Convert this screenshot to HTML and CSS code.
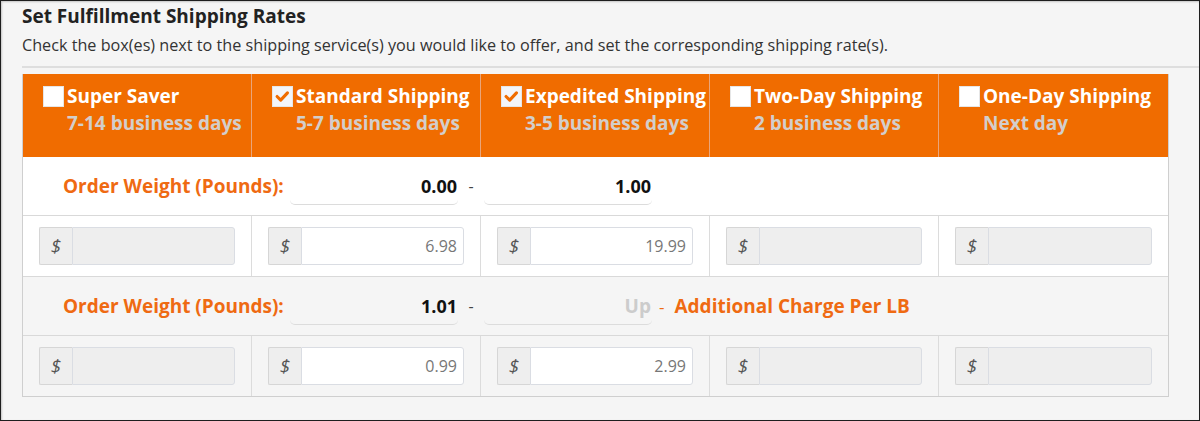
FILE: index.html
```html
<!DOCTYPE html>
<html>
<head>
  <title>Set Fulfillment Shipping Rates</title>
  <link rel="stylesheet" href="styles.css">
</head>
<body>
<div id='content'>
  <h2 class='title'>Set Fulfillment Shipping Rates</h2>
  <p class='subtitle'>Check the box(es) next to the shipping service(s) you would like to offer, and set the corresponding shipping rate(s).</p>
  <hr>

  <div class='rates'>
    <!-- header: one cell per shipping service -->
    <div class='rates-head'>
      <div class='service'>
        <div class='service-name'><span class='check'></span>Super Saver</div>
        <div class='service-days'>7-14 business days</div>
      </div>
      <div class='service'>
        <div class='service-name'><span class='check checked'><svg viewBox='0 0 21 21'><path d='M4.5 10.5 L8.5 14.5 L16 6.5'/></svg></span>Standard Shipping</div>
        <div class='service-days'>5-7 business days</div>
      </div>
      <div class='service'>
        <div class='service-name'><span class='check checked'><svg viewBox='0 0 21 21'><path d='M4.5 10.5 L8.5 14.5 L16 6.5'/></svg></span>Expedited Shipping</div>
        <div class='service-days'>3-5 business days</div>
      </div>
      <div class='service'>
        <div class='service-name'><span class='check'></span>Two-Day Shipping</div>
        <div class='service-days'>2 business days</div>
      </div>
      <div class='service'>
        <div class='service-name'><span class='check'></span>One-Day Shipping</div>
        <div class='service-days'>Next day</div>
      </div>
    </div>

    <div class='weight-row'>
      <div class='weight-label'>Order Weight (Pounds):</div>
      <div class='weight-input'>0.00</div>
      <div class='dash'>-</div>
      <div class='weight-input'>1.00</div>
    </div>

    <div class='price-row'>
      <div class='price-cell'><div class='input-group'><span class='addon'>$</span><span class='price disabled'></span></div></div>
      <div class='price-cell'><div class='input-group'><span class='addon'>$</span><span class='price'>6.98</span></div></div>
      <div class='price-cell'><div class='input-group'><span class='addon'>$</span><span class='price'>19.99</span></div></div>
      <div class='price-cell'><div class='input-group'><span class='addon'>$</span><span class='price disabled'></span></div></div>
      <div class='price-cell'><div class='input-group'><span class='addon'>$</span><span class='price disabled'></span></div></div>
    </div>

    <div class='weight-row alt'>
      <div class='weight-label'>Order Weight (Pounds):</div>
      <div class='weight-input'>1.01</div>
      <div class='dash'>-</div>
      <div class='weight-input up'>Up</div>
      <div class='extra'><span class='extra-dash'>-</span>Additional Charge Per LB</div>
    </div>

    <div class='price-row alt'>
      <div class='price-cell'><div class='input-group'><span class='addon'>$</span><span class='price disabled'></span></div></div>
      <div class='price-cell'><div class='input-group'><span class='addon'>$</span><span class='price'>0.99</span></div></div>
      <div class='price-cell'><div class='input-group'><span class='addon'>$</span><span class='price'>2.99</span></div></div>
      <div class='price-cell'><div class='input-group'><span class='addon'>$</span><span class='price disabled'></span></div></div>
      <div class='price-cell'><div class='input-group'><span class='addon'>$</span><span class='price disabled'></span></div></div>
    </div>
  </div>
</div>
</body>
</html>
```

FILE: styles.css
```css
html, body {
    margin: 0;
    height: 100%;
}

body {
    box-sizing: border-box;
    background-color: #f5f5f5;
    border: 1px solid #1e1e1e;
    box-shadow: inset 1px 1px 2px rgba(0, 0, 0, 0.2);
    font-family: 'Open Sans', 'Liberation Sans', sans-serif;
    color: #222;
    overflow: hidden;
}

#content {
    padding: 3px 0 0 21px;
}

.title {
    margin: 0;
    font-size: 19px;
    line-height: 24px;
    font-weight: 700;
    color: #222;
}

.subtitle {
    margin: 7px 0 0 0;
    font-size: 16.2px;
    line-height: 21px;
    color: #333;
}

hr {
    margin: 10px 0 0 0;
    border: none;
    height: 2px;
    background-color: #dedede;
}

.rates {
    margin-top: 6px;
    width: 1147px;
    box-sizing: border-box;
    border: 1px solid #cfcfcf;
    border-top: none;
}

/* header */
.rates-head {
    display: grid;
    grid-template-columns: repeat(5, 1fr);
    background-color: #f06c00;
}

.service {
    padding: 9px 0 20px 20px;
    border-right: 1px solid #e9a57a;
    font-size: 19px;
    line-height: 27px;
    font-weight: 700;
    white-space: nowrap;
}

.service:last-child {
    border-right: none;
}

.service-name {
    display: flex;
    align-items: center;
    color: #fff;
}

.service-days {
    padding-left: 24px;
    color: #d3cecb;
}

.check {
    width: 21px;
    height: 21px;
    margin-right: 3px;
    box-sizing: border-box;
    border: 1px solid #e6e6e6;
    background-color: #fff;
    display: inline-block;
}

.check.checked {
    background-color: #f3f5fa;
}

.check svg {
    display: block;
    width: 19px;
    height: 19px;
}

.check path {
    fill: none;
    stroke: #f06c00;
    stroke-width: 3.4;
    stroke-linecap: round;
    stroke-linejoin: round;
}

/* weight rows */
.weight-row {
    display: flex;
    align-items: center;
    height: 58px;
    padding-left: 40px;
    background-color: #fff;
    border-bottom: 1px solid #d9d9d9;
    font-size: 18px;
    font-weight: 700;
}

.weight-row.alt,
.price-row.alt {
    background-color: #f5f5f5;
}

.weight-label {
    width: 227px;
    color: #ef6a12;
    font-size: 19px;
    white-space: nowrap;
}

.weight-input {
    width: 168px;
    height: 38px;
    line-height: 38px;
    box-sizing: border-box;
    padding-right: 1px;
    text-align: right;
    border-bottom: 1px solid #dcdcdc;
    border-radius: 0 0 5px 5px;
    color: #111;
}

.weight-input.up {
    color: #cccccc;
    font-size: 19px;
}

.dash {
    width: 26px;
    text-align: center;
    color: #444;
    font-weight: 400;
    font-size: 16px;
}

.extra {
    color: #ef6a12;
    font-size: 19px;
    white-space: nowrap;
}

.extra-dash {
    margin: 0 10px 0 7px;
    font-weight: 400;
    font-size: 17px;
}

/* price rows */
.price-row {
    display: grid;
    grid-template-columns: repeat(5, 1fr);
    background-color: #fff;
    border-bottom: 1px solid #d9d9d9;
}

.price-row.alt {
    border-bottom: none;
}

.price-cell {
    padding: 11px 16px 11px 16px;
    border-right: 1px solid #dcdcdc;
}

.price-cell:last-child {
    border-right: none;
}

.input-group {
    display: flex;
    height: 38px;
}

.addon {
    width: 33px;
    box-sizing: border-box;
    border: 1px solid #d6d6d6;
    border-right: none;
    border-radius: 2px 0 0 2px;
    background-color: #eeeeee;
    color: #555;
    font-style: italic;
    font-size: 19px;
    line-height: 36px;
    text-align: center;
}

.price {
    flex: 1;
    box-sizing: border-box;
    border: 1px solid #dadde3;
    border-radius: 0 3px 3px 0;
    background-color: #fff;
    padding-right: 6px;
    text-align: right;
    font-size: 16px;
    line-height: 36px;
    color: #777;
}

.price.disabled {
    background-color: #eeeeee;
}
```
